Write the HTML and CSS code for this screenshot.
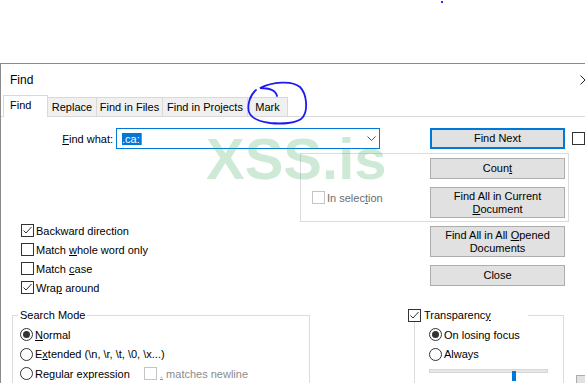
FILE: index.html
```html
<!DOCTYPE html>
<html lang="en">
<head>
    <meta charset="UTF-8">
    <title>Find</title>
    <link rel="stylesheet" href="styles.css">
</head>
<body>
<div class="speck"></div>
<!--dialog window, cut by the right edge-->
<div class="dlg">
    <div class="titlebar">
        <span class="title">Find</span>
        <svg class="close" width="10" height="10" viewBox="0 0 10 10"><path d="M0.5 0.5 L9.5 9.5 M9.5 0.5 L0.5 9.5" stroke="#222" stroke-width="1" fill="none"/></svg>
    </div>
    <div class="tabs">
        <div class="tab on tab-find">Find</div>
        <div class="tab tab-replace">Replace</div>
        <div class="tab tab-files">Find in Files</div>
        <div class="tab tab-proj">Find in Projects</div>
        <div class="tab tab-mark">Mark</div>
    </div>
    <div class="panel">
        <div class="what">
            <label class="what-label"><u>F</u>ind what:</label>
            <div class="combo">
                <span class="sel">.ca:</span><span class="caret"></span>
                <svg class="chev" width="9" height="5" viewBox="0 0 9 5"><polyline points="0.5,0.5 4.5,4.5 8.5,0.5" stroke="#555" fill="none"/></svg>
            </div>
            <div class="btn btn-next"><span>Find Next</span></div>
            <span class="cb side"></span>
        </div>

        <div class="grp-sel">
            <div class="sel-area">
                <div class="opt dis"><span class="cb off"></span><span>In selec<u>t</u>ion</span></div>
            </div>
            <div class="btncol">
                <div class="btn"><span>Coun<u>t</u></span></div>
                <div class="btn tall"><span>Find All in Current<br><u>D</u>ocument</span></div>
            </div>
        </div>

        <div class="mid">
            <div class="opts">
                <div class="opt"><span class="cb"><svg width="11" height="11" viewBox="0 0 11 11"><polyline points="1.5,5.5 4,8 9.5,2" stroke="#333" fill="none"/></svg></span><span>Backward direction</span></div>
                <div class="opt"><span class="cb"></span><span>Match <u>w</u>hole word only</span></div>
                <div class="opt"><span class="cb"></span><span>Match <u>c</u>ase</span></div>
                <div class="opt"><span class="cb"><svg width="11" height="11" viewBox="0 0 11 11"><polyline points="1.5,5.5 4,8 9.5,2" stroke="#333" fill="none"/></svg></span><span>Wra<u>p</u> around</span></div>
            </div>
            <div class="btncol col2">
                <div class="btn tall"><span>Find All in All <u>O</u>pened<br>Documents</span></div>
                <div class="btn"><span>Close</span></div>
            </div>
        </div>

        <div class="bottom">
            <fieldset class="fs fs-mode">
                <legend>Search Mode</legend>
                <div class="opt rrow"><span class="rd on"></span><span><u>N</u>ormal</span></div>
                <div class="opt rrow"><span class="rd"></span><span>E<u>x</u>tended (\n, \r, \t, \0, \x...)</span></div>
                <div class="opt rrow"><span class="rd"></span><span class="re-label">Re<u>g</u>ular expression</span><span class="cb off"></span><span class="dis-text"><u>.</u> matches newline</span></div>
            </fieldset>
            <fieldset class="fs fs-tr">
                <legend><span class="cb"><svg width="11" height="11" viewBox="0 0 11 11"><polyline points="1.5,5.5 4,8 9.5,2" stroke="#333" fill="none"/></svg></span><span>Transparenc<u>y</u></span></legend>
                <div class="opt rrow"><span class="rd on"></span><span>On losing focus</span></div>
                <div class="opt rrow"><span class="rd"></span><span>Always</span></div>
                <div class="slider"><div class="track"></div><div class="thumb"></div></div>
            </fieldset>
            <div class="btn btn-cut"></div>
        </div>

        <div class="watermark">XSS.is</div>
    </div>

    <!--hand drawn circle round the Mark tab-->
    <svg class="scribble" width="80" height="52" viewBox="241 78 80 52">
        <path d="M277,96 C276,91 270,88 260,88 C272,82 292,80 300,87 C307,94 308,110 303,117 C298,124 280,124 270,123 C262,122 252,120 249,112 C247,105 250,95 256,90" stroke="#1c1cf0" stroke-width="1.8" fill="none" stroke-linecap="round"/>
    </svg>
</div>
</body>
</html>
```
FILE: styles.css
```css
*{
    margin: 0px;
    padding: 0px;
    box-sizing: border-box;
}
body
{
    width: 585px;
    height: 383px;
    overflow: hidden;
    background: #FFFFFF;
    font-family: "Liberation Sans", Arial, sans-serif;
    font-size: 11px;
    color: #000000;
}
.speck
{
    width: 2px;
    height: 2px;
    margin: 1px 0 0 441px;
    background: #2b2bff;
}
.dlg
{
    position: relative;
    width: 640px;
    height: 330px;
    margin-top: 60px;
    border-top: 1px solid #8a8a8a;
    border-left: 1px solid #8a8a8a;
}
.titlebar
{
    height: 31px;
    display: flex;
    align-items: center;
    padding-left: 9px;
    font-size: 12px;
}
.title
{
    width: 570px;
}
.tabs
{
    height: 21px;
    display: flex;
    align-items: flex-end;
    padding-left: 2px;
}
.tab
{
    height: 19px;
    margin-left: -1px;
    border: 1px solid #d9d9d9;
    border-bottom: none;
    background: #f0f0f0;
    display: flex;
    align-items: center;
    justify-content: center;
}
.tab.on
{
    height: 22px;
    margin-left: 0px;
    margin-bottom: -1px;
    background: #FFFFFF;
    justify-content: flex-start;
    padding: 0 0 3px 6px;
    position: relative;
    z-index: 1;
}
.tab-find { width: 45px; }
.tab-replace { width: 50px; }
.tab-files { width: 67px; }
.tab-proj { width: 86px; }
.tab-mark { width: 41px; }

.panel
{
    position: relative;
    border-top: 1px solid #d9d9d9;
}
.what
{
    display: flex;
    align-items: center;
    height: 21px;
    margin-top: 11px;
}
.what-label
{
    width: 115px;
    padding-right: 3px;
    text-align: right;
}
.combo
{
    width: 264px;
    height: 21px;
    border: 1px solid #0078d7;
    display: flex;
    align-items: center;
    padding-left: 5px;
}
.sel
{
    background: #0078d7;
    color: #FFFFFF;
    line-height: 12px;
    padding-right: 1px;
}
.caret
{
    width: 1px;
    height: 12px;
    background: #e07a1f;
}
.chev
{
    margin-left: auto;
    margin-right: 3px;
}
.btn
{
    width: 135px;
    height: 21px;
    background: #e1e1e1;
    border: 1px solid #adadad;
    display: flex;
    align-items: center;
    justify-content: center;
    text-align: center;
    line-height: 13px;
}
.btn.tall
{
    height: 31px;
}
.btn-next
{
    margin-left: 50px;
    border: 2px solid #0078d7;
}
.cb
{
    width: 13px;
    height: 13px;
    flex: none;
    border: 1px solid #333333;
    background: #FFFFFF;
    display: flex;
    align-items: center;
    justify-content: center;
}
.cb.off
{
    border-color: #c4c4c4;
}
.cb.side
{
    margin-left: 7px;
}
.rd
{
    width: 13px;
    height: 13px;
    flex: none;
    border: 1px solid #333333;
    border-radius: 50%;
}
.rd.on::after
{
    content: "";
    display: block;
    width: 7px;
    height: 7px;
    margin: 2px;
    border-radius: 50%;
    background: #333333;
}
.opt
{
    height: 19px;
    display: flex;
    align-items: center;
    gap: 2px;
}
.opt.dis
{
    height: 13px;
    color: #6d6d6d;
}
.grp-sel
{
    display: flex;
    width: 269px;
    height: 69px;
    margin: 4px 0 0 299px;
    border: 1px solid #dcdcdc;
}
.sel-area
{
    flex: 1;
    padding: 37px 0 0 11px;
}
.btncol
{
    display: flex;
    flex-direction: column;
    gap: 8px;
    padding: 4px 3px 0 0;
}
.mid
{
    display: flex;
}
.opts
{
    width: 429px;
    padding-left: 20px;
    margin-top: -1px;
}
.col2
{
    padding-right: 0px;
}
.bottom
{
    display: flex;
    align-items: flex-start;
}
.fs
{
    margin-top: 12px;
    border: 1px solid #dcdcdc;
    padding: 3px 0 0 7px;
}
.fs legend
{
    line-height: 13px;
    padding: 0 2px;
    margin-left: -2px;
}
.fs-mode
{
    width: 298px;
    height: 100px;
    margin-left: 11px;
}
.rrow
{
    height: 19.5px;
}
.re-label
{
    width: 107px;
}
.dis-text
{
    color: #8c8c8c;
    margin-left: 1px;
}
.fs-tr
{
    width: 150px;
    height: 100px;
    margin-left: 104px;
    padding-left: 14px;
}
.fs-tr legend
{
    width: 120px;
    margin-left: -21px;
    padding: 0;
    display: flex;
    align-items: center;
    gap: 3px;
    background: #FFFFFF;
}
.slider
{
    position: relative;
    width: 120px;
    height: 14px;
}
.track
{
    margin-top: 5px;
    width: 119px;
    height: 4px;
    background: #e7e7e7;
    border: 1px solid #d6d6d6;
}
.thumb
{
    position: absolute;
    left: 83px;
    top: 2px;
    width: 4px;
    height: 10px;
    background: #0078d7;
}
.btn-cut
{
    width: 30px;
    height: 22px;
    margin: 78px 0 0 12px;
}
.watermark
{
    position: absolute;
    left: 205px;
    top: 13px;
    font-size: 58px;
    line-height: 58px;
    font-weight: bold;
    color: rgba(60, 170, 90, 0.25);
    pointer-events: none;
}
.scribble
{
    position: absolute;
    left: 240px;
    top: 14px;
}
```
